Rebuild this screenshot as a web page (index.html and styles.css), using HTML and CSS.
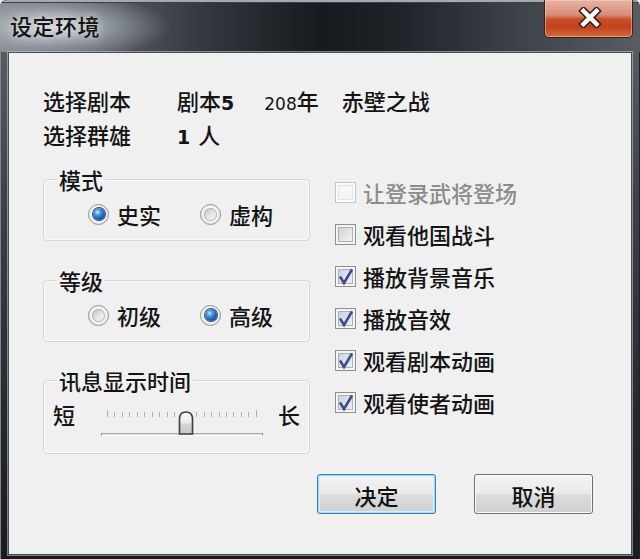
FILE: index.html
```html
<!DOCTYPE html>
<html lang="zh-CN">
<head>
<meta charset="utf-8">
<title>设定环境</title>
<link rel="stylesheet" href="styles.css">
</head>
<body>
<div class="window">
  <div class="titlebar">
    <div class="title">设定环境</div>
    <button class="close" aria-label="关闭">
      <svg width="24" height="21" viewBox="0 0 24 21">
        <path d="M5.5 4 L18.5 17 M18.5 4 L5.5 17" stroke="#3b1a12" stroke-width="7.5" stroke-linecap="square" fill="none"/>
        <path d="M5.5 4 L18.5 17 M18.5 4 L5.5 17" stroke="#ffffff" stroke-width="4.5" stroke-linecap="square" fill="none"/>
      </svg>
    </button>
  </div>
  <div class="client">
    <div class="info">
      <div class="info-label">选择剧本</div>
      <div class="info-value"><span>剧本<b class="num">5</b></span><span class="year"><span class="digits">208</span>年</span><span class="battle">赤壁之战</span></div>
      <div class="info-label">选择群雄</div>
      <div class="info-value"><b class="num one">1</b>人</div>
    </div>
    <div class="settings">
      <div class="groups">
        <fieldset class="group">
          <legend>模式</legend>
          <div class="radio-row">
            <label class="radio-item"><span class="radio checked"></span>史实</label>
            <label class="radio-item"><span class="radio"></span>虚构</label>
          </div>
        </fieldset>
        <fieldset class="group group-level">
          <legend>等级</legend>
          <div class="radio-row">
            <label class="radio-item"><span class="radio"></span>初级</label>
            <label class="radio-item"><span class="radio checked"></span>高级</label>
          </div>
        </fieldset>
        <fieldset class="group group-time">
          <legend>讯息显示时间</legend>
          <div class="slider-row">
            <span class="end-label">短</span>
            <div class="slider">
              <div class="ticks">
                <i></i><i></i><i></i><i></i><i></i><i></i><i></i><i></i><i></i><i></i><i></i><i></i><i></i><i></i><i></i><i></i><i></i><i></i><i></i><i></i><i></i>
              </div>
              <div class="track"></div>
              <svg class="thumb" width="16" height="24" viewBox="0 0 16 24">
                <defs>
                  <linearGradient id="tg" x1="0" y1="0" x2="0" y2="1">
                    <stop offset="0" stop-color="#fbfbfb"/>
                    <stop offset="0.5" stop-color="#ececec"/>
                    <stop offset="0.55" stop-color="#d4d4d4"/>
                    <stop offset="1" stop-color="#c8c8c8"/>
                  </linearGradient>
                </defs>
                <path d="M1.5 23 V8 Q1.5 1 8 1 Q14.5 1 14.5 8 V23 Z" fill="url(#tg)" stroke="#3e3e3e" stroke-width="1.6"/>
              </svg>
            </div>
            <span class="end-label long">长</span>
          </div>
        </fieldset>
      </div>
      <div class="options">
        <label class="option disabled"><span class="check"></span>让登录武将登场</label>
        <label class="option"><span class="check"></span>观看他国战斗</label>
        <label class="option"><span class="check checked"><svg width="19" height="19" viewBox="0 0 19 19"><path d="M4 9.5 L8 16 L16 2.5" stroke="#3d4d8c" stroke-width="2.6" fill="none" stroke-linejoin="miter"/></svg></span>播放背景音乐</label>
        <label class="option"><span class="check checked"><svg width="19" height="19" viewBox="0 0 19 19"><path d="M4 9.5 L8 16 L16 2.5" stroke="#3d4d8c" stroke-width="2.6" fill="none" stroke-linejoin="miter"/></svg></span>播放音效</label>
        <label class="option"><span class="check checked"><svg width="19" height="19" viewBox="0 0 19 19"><path d="M4 9.5 L8 16 L16 2.5" stroke="#3d4d8c" stroke-width="2.6" fill="none" stroke-linejoin="miter"/></svg></span>观看剧本动画</label>
        <label class="option"><span class="check checked"><svg width="19" height="19" viewBox="0 0 19 19"><path d="M4 9.5 L8 16 L16 2.5" stroke="#3d4d8c" stroke-width="2.6" fill="none" stroke-linejoin="miter"/></svg></span>观看使者动画</label>
      </div>
    </div>
    <div class="buttons">
      <button class="btn default">决定</button>
      <button class="btn">取消</button>
    </div>
  </div>
</div>
</body>
</html>
```
FILE: styles.css
```css
* { box-sizing: border-box; }
html, body { margin: 0; padding: 0; }
body {
  width: 640px;
  height: 559px;
  overflow: hidden;
  background: #e4e6e8;
  font-family: "Noto Sans CJK SC", "Noto Sans", sans-serif;
  font-weight: 500;
  color: #141414;
}
.window {
  width: 640px;
  height: 559px;
  display: flex;
  flex-direction: column;
  border-radius: 7px 7px 0 0;
  overflow: hidden;
  background: linear-gradient(to bottom, #5f656c 0%, #3e4248 35%, #25282d 75%, #1a1c20 100%);
  box-shadow: inset 0 1px 0 #b8bcc0, inset 1px 0 0 #80858a, inset -1px 0 0 #202226;
}
.titlebar {
  height: 52px;
  flex: none;
  display: flex;
  justify-content: space-between;
  align-items: flex-start;
  padding: 0 7px 0 10px;
  background:
    radial-gradient(ellipse 115px 34px at 55px 27px, rgba(225,230,235,0.85) 0%, rgba(190,198,205,0.45) 55%, rgba(150,158,166,0) 100%),
    linear-gradient(to right, #7c838a 0%, #5b6168 14%, #34383e 32%, #16191d 50%, #1f2227 62%, #3c4148 80%, #585d64 100%);
  box-shadow: inset 0 2px 0 #a4a9ae, inset 0 3px 0 #3c4046;
}
.title {
  margin-top: 8px;
  font-size: 22px;
  line-height: 34px;
  color: #141414;
  letter-spacing: 0.5px;
  text-shadow: 0 0 8px rgba(255,255,255,0.7);
}
.close {
  width: 89px;
  height: 38px;
  margin: 0;
  padding: 0 0 2px 3px;
  display: flex;
  align-items: center;
  justify-content: center;
  border: 1px solid #3c211b;
  border-top: none;
  border-radius: 0 0 5px 5px;
  background: linear-gradient(to bottom, #e9b2a3 0%, #d98e78 40%, #c9502c 52%, #c2421c 72%, #d8683f 100%);
  box-shadow: inset 0 0 0 1px rgba(255,220,205,0.45);
}
.client {
  flex: 1;
  margin: 0 8px 4px;
  background: #f0f0f0;
  border: 1px solid #4a4f55;
  box-shadow: 0 0 0 1px rgba(200,205,210,0.55);
  padding: 30px 0 0 34px;
  display: flex;
  flex-direction: column;
}
.info {
  display: grid;
  grid-template-columns: 134px auto;
  grid-auto-rows: 34px;
  font-size: 22px;
  line-height: 34px;
}
.info-value { white-space: nowrap; }
.num {
  font-family: "DejaVu Sans", sans-serif;
  font-weight: bold;
  font-size: 19px;
  line-height: 1;
}
.one { margin-right: 8px; }
.year { margin-left: 30px; }
.digits { font-family: "DejaVu Sans", sans-serif; font-size: 17px; line-height: 1; }
.battle { margin-left: 23px; }

.settings {
  display: flex;
  align-items: flex-start;
  margin-top: 16px;
}
.groups {
  width: 267px;
  display: flex;
  flex-direction: column;
}
.group {
  margin: 0;
  padding: 0 0 0 9px;
  border: 1px solid #d3d7db;
  border-radius: 4px;
  box-shadow: inset 0 0 0 1px #fafafa;
}
.group-level { margin-top: 27px; }
.group-time { margin-top: 26px; }
legend {
  margin-left: 4px;
  padding: 0 2px;
  font-size: 22px;
  line-height: 24px;
}
.radio-row {
  display: flex;
  align-items: center;
  gap: 39px;
  height: 30px;
  margin: 8px 0 11px 35px;
}
.radio-item {
  display: flex;
  align-items: center;
  gap: 8px;
  font-size: 22px;
  line-height: 30px;
}
.radio {
  width: 21px;
  height: 21px;
  border-radius: 50%;
  border: 1px solid #8d9296;
  background: radial-gradient(circle at 50% 45%, #ffffff 0%, #f2f2f2 55%, #d6d6d6 100%);
  display: flex;
  align-items: center;
  justify-content: center;
}
.radio::after {
  content: "";
  width: 13px;
  height: 13px;
  border-radius: 50%;
  background: linear-gradient(135deg, #bcbfc2 0%, #e6e7e8 55%, #fbfbfb 100%);
  box-shadow: inset 0 0 0 1px #b3b6b9;
}
.radio.checked::after {
  width: 12px;
  height: 12px;
  background: radial-gradient(circle at 38% 35%, #cdeeff 0%, #4e9fe2 25%, #1c61b5 60%, #0b3377 100%);
  box-shadow: 0 0 0 1px #27477a;
}

.slider-row {
  display: flex;
  align-items: flex-start;
  height: 40px;
  margin: 8px 0 13px 0;
}
.end-label {
  font-size: 22px;
  line-height: 28px;
}
.slider {
  position: relative;
  width: 162px;
  height: 40px;
  margin-left: 26px;
}
.ticks {
  display: flex;
  justify-content: space-between;
  align-items: flex-end;
  height: 7px;
  margin: 10px 6px 0;
}
.ticks i {
  width: 1px;
  height: 5px;
  background: #b0b0b0;
}
.ticks i:first-child, .ticks i:last-child { height: 7px; }
.track {
  margin-top: 16px;
  height: 3px;
  border-top: 1px solid #a4a4a4;
  border-bottom: 1px solid #ffffff;
  border-left: 1px solid #8a8a8a;
  border-right: 1px solid #8a8a8a;
  background: #e2e2e2;
}
.thumb {
  position: absolute;
  left: 77px;
  top: 11px;
}
.long { margin-left: 15px; }

.options {
  margin-left: 25px;
  padding-top: 4px;
  display: flex;
  flex-direction: column;
}
.option {
  display: flex;
  align-items: center;
  gap: 7px;
  height: 42px;
  font-size: 22px;
  line-height: 30px;
}
.option.disabled { color: #8c8c8c; }
.check {
  width: 21px;
  height: 21px;
  border: 1px solid #8e8f8f;
  background: linear-gradient(135deg, #c6c9ce 0%, #dfe1e4 45%, #f7f7f7 100%);
  box-shadow: inset 0 0 0 2px #f5f5f5, inset 0 0 0 3px #adb1b6;
  display: flex;
  align-items: center;
  justify-content: center;
}
.option.disabled .check {
  border-color: #c4c6c8;
  background: #f6f6f6;
  box-shadow: inset 0 0 0 2px #fbfbfb, inset 0 0 0 3px #e2e3e4;
}
.check.checked {
  background: linear-gradient(135deg, #c3c8da 0%, #dde0ec 45%, #f3f4f8 100%);
}

.buttons {
  display: flex;
  justify-content: flex-end;
  gap: 38px;
  margin-top: 20px;
  padding-right: 38px;
}
.btn {
  width: 119px;
  height: 40px;
  margin: 0;
  padding: 2px 0 0;
  font-family: "Noto Sans CJK SC", sans-serif;
  font-weight: 500;
  font-size: 22px;
  line-height: 34px;
  color: #111;
  border: 1px solid #707070;
  border-radius: 3px;
  background: linear-gradient(to bottom, #f3f3f3 0%, #ebebeb 48%, #dddddd 52%, #cfcfcf 100%);
  box-shadow: inset 0 0 0 1px #fbfbfb;
}
.btn.default {
  border-color: #3a7fb4;
  box-shadow: inset 0 0 0 1px #9fdcf6, inset 0 0 0 2px #d6f0fb;
}
```
